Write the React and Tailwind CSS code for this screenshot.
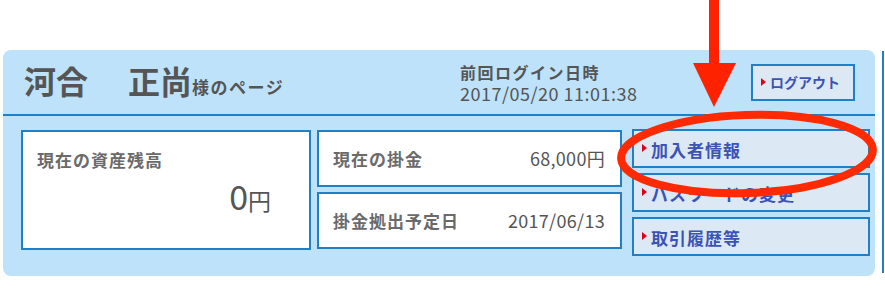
const JP = { fontFamily: '"Noto Sans CJK JP", "Noto Sans", sans-serif' };

function Marker() {
  return (
    <svg width="5" height="8" viewBox="0 0 5 8" className="shrink-0">
      <path d="M0 0 L5 4 L0 8 Z" fill="#e0001b" />
    </svg>
  );
}

function NavButton({ label }) {
  return (
    <a className="flex h-[39px] items-start gap-[4px] border-2 border-[#1f7fc7] bg-[#dce9f4] pl-[8px] pt-[9px] text-[17px] font-bold leading-[20px] tracking-[1px] text-[#3c53b6]">
      <span className="mt-[4px]">
        <Marker />
      </span>
      {label}
    </a>
  );
}

function InfoRow({ label, value }) {
  return (
    <div className="flex h-[57px] items-center justify-between border-2 border-[#1f7fc7] bg-white pl-[14px] pr-[15px]">
      <span className="text-[17px] font-bold tracking-[1px] text-[#6a6a6a]">{label}</span>
      <span className="text-[18px] tracking-[0.3px] text-[#555]">{value}</span>
    </div>
  );
}

export default function App() {
  return (
    <div className="relative h-[289px] w-[885px] overflow-hidden bg-white" style={JP}>
      <div className="flex pl-[3px] pt-[50px]">
        <div className="w-[872px] rounded-[8px] bg-[#bde2fa]">
          <div className="flex h-[66px] items-center border-b-2 border-[#1f7fc7] pl-[21px]">
            <div className="flex w-[436px] items-baseline text-[#555]">
              <span className="text-[32px] font-bold leading-none">河合</span>
              <span className="ml-[40px] text-[32px] font-bold leading-none">正尚</span>
              <span className="text-[17px] font-bold tracking-[1.5px]">様のページ</span>
            </div>
            <div className="flex w-[291px] flex-col gap-[1px] text-[#555]">
              <div className="text-[16px] font-bold leading-[20px] tracking-[1.5px]">前回ログイン日時</div>
              <div className="text-[18px] leading-[20px] tracking-[0.5px]">2017/05/20 11:01:38</div>
            </div>
            <a className="flex h-[37px] w-[104px] items-center gap-[4px] border-2 border-[#1f7fc7] bg-[#dce9f4] pl-[8px] text-[14px] font-bold text-[#3c53b6]">
              <Marker />
              ログアウト
            </a>
          </div>
          <div className="flex pb-[20px] pl-[18px] pt-[13px]">
            <div className="mt-[1px] flex h-[120px] w-[290px] flex-col border-2 border-[#1f7fc7] bg-white pl-[14px] pr-[38px] pt-[17px]">
              <span className="text-[17px] font-bold leading-[22px] tracking-[1px] text-[#6a6a6a]">現在の資産残高</span>
              <div className="mt-[8px] flex items-baseline justify-end text-[#555]">
                <span className="text-[34px] leading-none">0</span>
                <span className="text-[23px] leading-none">円</span>
              </div>
            </div>
            <div className="ml-[6px] mt-[1px] flex w-[305px] flex-col gap-[5px]">
              <InfoRow label="現在の掛金" value="68,000円" />
              <InfoRow label="掛金拠出予定日" value="2017/06/13" />
            </div>
            <div className="ml-[10px] flex w-[238px] flex-col gap-[5px]">
              <NavButton label="加入者情報" />
              <NavButton label="パスワードの変更" />
              <NavButton label="取引履歴等" />
            </div>
          </div>
        </div>
        <div className="ml-[7px] mt-[1px] h-[222px] border-l-2 border-[#1f7fc7]" />
      </div>
      <svg className="pointer-events-none absolute left-0 top-0" width="885" height="289" viewBox="0 0 885 289">
        <rect x="709" y="0" width="10" height="64" fill="#ff2200" />
        <path d="M693 63 L736 63 L714 107 Z" fill="#ff2200" />
        <ellipse cx="747" cy="154" rx="126" ry="39" fill="none" stroke="#ff2a00" strokeWidth="8" transform="rotate(-2 747 154)" />
      </svg>
    </div>
  );
}
